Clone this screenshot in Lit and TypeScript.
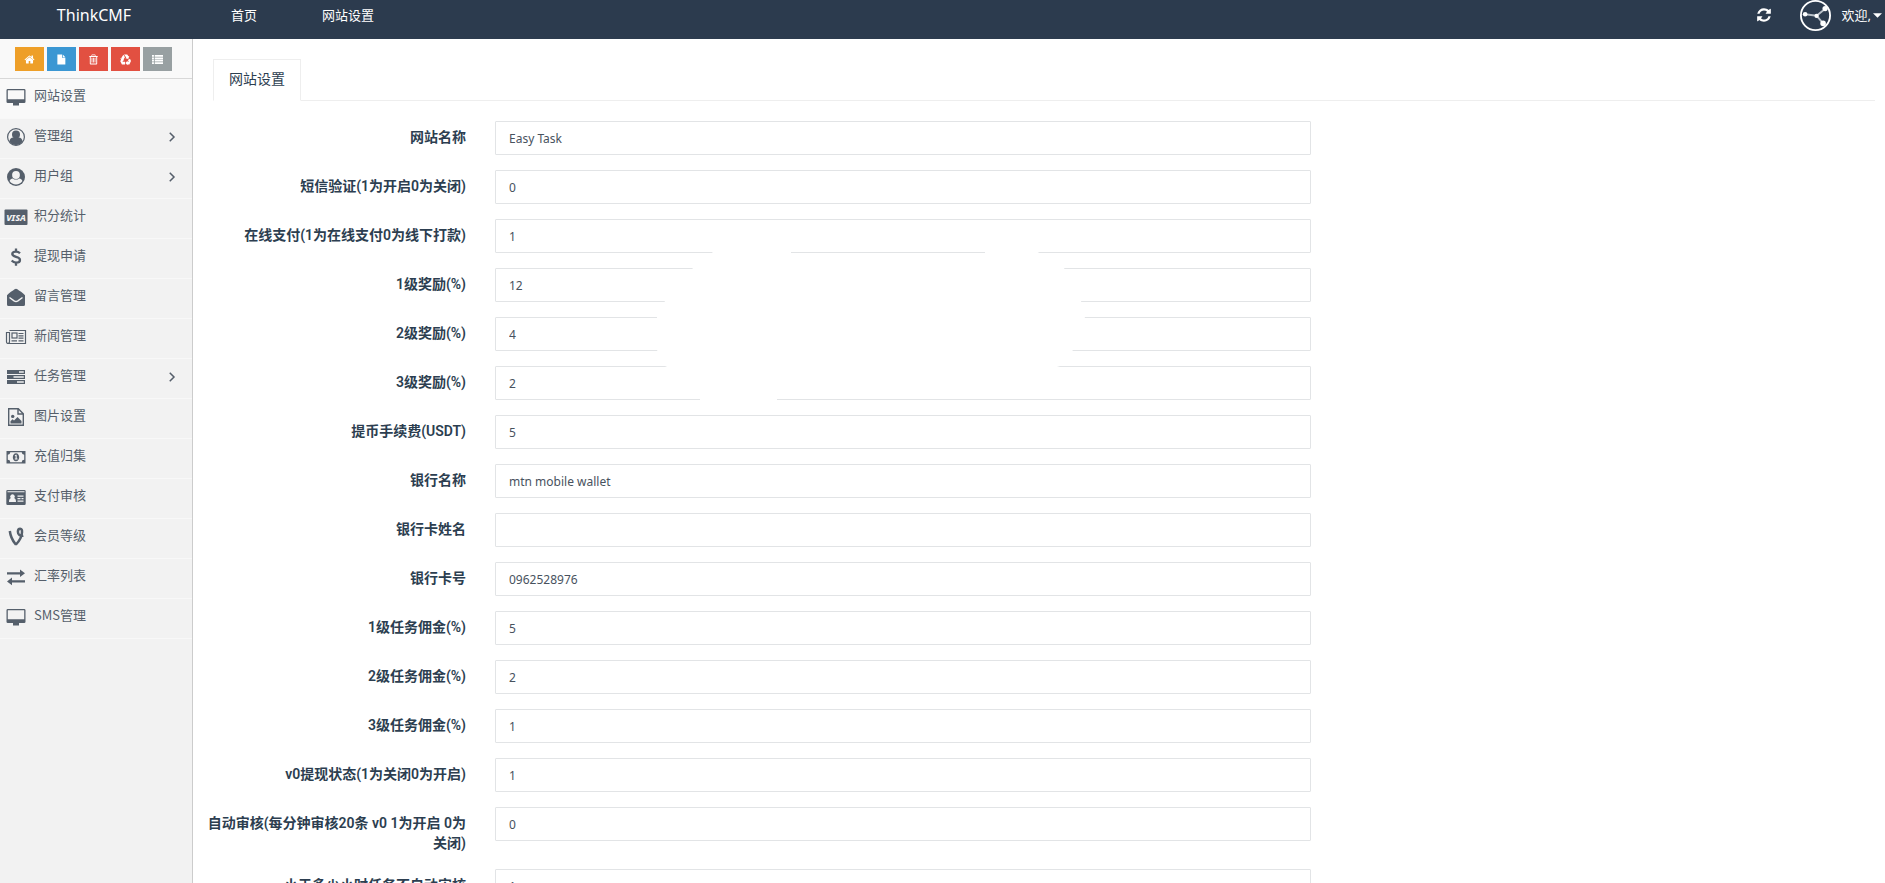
import { LitElement, html, svg, css } from "lit";
import { customElement } from "lit/decorators.js";

// Icon shapes, each on a 20 x 20 grid.
const ICONS: Record<string, unknown> = {
  desktop: svg`<path fill-rule="evenodd" d="M1.800 2h16.400A1.300 1.300 0 0 1 19.500 3.300v11.400a1.300 1.300 0 0 1-1.300 1.300H13v2.500H7V16H1.800A1.300 1.300 0 0 1 .500 14.700V3.300A1.300 1.300 0 0 1 1.800 2zM1.800 3.300v9h16.400v-9z"/>`,
  userCircle: svg`<circle cx="10" cy="10" r="8.400" fill="none" stroke="currentColor" stroke-width="1.200"/><circle cx="10" cy="7.600" r="4"/><path d="M3.300 14.500c.5-2.700 2-4 3.800-4h5.800c1.800 0 3.300 1.300 3.800 4A8 8 0 0 1 10 18a8 8 0 0 1-6.700-3.500z"/>`,
  userRing: svg`<circle cx="10" cy="10" r="9"/><circle cx="10" cy="8" r="3.900" fill="#f2f2f2"/><path fill="#f2f2f2" d="M3.600 14c.5-1.700 1.600-2.500 3.200-2.600 2 1.600 4.400 1.600 6.400 0 1.600.1 2.700.900 3.200 2.600a7.600 7.600 0 0 1-12.800 0z"/>`,
  visa: svg`<rect x="-1.500" y="2.500" width="23" height="15.500" rx="1"/><text x="10" y="14" text-anchor="middle" font-family="Noto Sans, sans-serif" font-size="9" font-weight="800" font-style="italic" fill="#f2f2f2">VISA</text>`,
  dollar: svg`<path fill="none" stroke="currentColor" stroke-width="2.300" d="M14 6.300C12.700 5 11.500 4.600 10 4.600c-2.300 0-3.700 1-3.700 2.500 0 3.700 7.700 1.800 7.700 5.800 0 1.700-1.500 2.700-4 2.700-1.800 0-3.200-.7-4.300-2M10 1.500v3.200M10 15.500v3.200"/>`,
  envelope: svg`<path d="M1 8.200C3 6 7 3.600 8.600 2.300c.9-.7 1.900-.7 2.800 0C13 3.600 17 6 19 8.200V17.500a1.500 1.500 0 0 1-1.500 1.500h-15A1.500 1.500 0 0 1 1 17.500z"/><path fill="none" stroke="#f2f2f2" stroke-width="1.400" d="M3.500 10.500l4.600 3.400c1.200.8 2.600.8 3.800 0l4.600-3.400"/>`,
  news: svg`<g fill="none" stroke="currentColor" stroke-width="1.200"><path d="M3.500 3.500h16v13H2.300A1.800 1.800 0 0 1 .500 14.700V5.500h3M3.500 5v9.700a1.500 1.500 0 0 1-1.500 1.600"/><rect x="6" y="6" width="5" height="5"/><path d="M12.500 6.500h5M12.500 8.800h5M12.500 11.100h5M5.500 13.800h5.500M12.500 13.800h5"/></g>`,
  tasks: svg`<path fill-rule="evenodd" d="M1 3h18v4H1zM1 8h18v4H1zM1 13h18v4H1zM13 4.300v1.500h4.800V4.300zM7.500 9.300v1.500h10.300V9.300zM11 14.300v1.500h6.800v-1.500z"/>`,
  image: svg`<path fill="none" stroke="currentColor" stroke-width="1.400" d="M2.700 1.700h9.600l5 5v11.600H2.700zM12 2v5h5"/><circle cx="6.700" cy="9.400" r="1.700"/><path d="M4.500 16.500v-2.300l2-2 1.500 1.400L11.500 10l4 4v2.500z"/>`,
  money: svg`<path fill-rule="evenodd" d="M.500 4h19v12.500H.500zM1.800 7.700v5.100a2.500 2.500 0 0 1 2.500 2.400h11.400a2.500 2.500 0 0 1 2.500-2.400V7.700a2.500 2.500 0 0 1-2.500-2.400H4.300a2.500 2.500 0 0 1-2.500 2.400z"/><path fill-rule="evenodd" d="M10 6.300c1.900 0 3.200 1.700 3.200 4s-1.300 4-3.200 4-3.200-1.700-3.200-4 1.300-4 3.200-4zM8.700 8.500l.5.700.4-.3v2.600h-.8v1h2.700v-1h-.8V7.800h-.9z"/>`,
  idcard: svg`<path fill-rule="evenodd" d="M1.500 3h17a1.200 1.200 0 0 1 1.200 1.200v12.600a1.200 1.200 0 0 1-1.200 1.200h-17A1.200 1.200 0 0 1 .300 16.800V4.200A1.200 1.200 0 0 1 1.500 3zM1.500 4.200v1h17v-1zM3 15h7c0-2.500-.8-3.600-1.800-3.700a2.300 2.300 0 1 0-3.400 0C3.800 11.400 3 12.500 3 15zM11.500 8.500v1.200h6V8.500zM11.500 11v1.200h3V11zM15.500 11v1.200h2V11zM11.500 13.500v1.200h6v-1.200z"/>`,
  vine: svg`<path fill="none" stroke="currentColor" stroke-width="2.500" d="M3.800 4c.6 4.800 2.600 9.300 5.600 13h1c2.800-3 5.300-6.800 5.600-11.500.2-2.600-.5-3.800-1.800-3.800-1.500 0-2.300 1.100-2.300 3 0 3 2.200 4.700 5.400 4"/>`,
  exchange: svg`<path d="M1 5.200h13V2.500l5 3.800-5 3.800V7.500H1zM19 15.500H6v2.700l-5-3.800 5-3.800v2.600h13z"/>`,
  home: svg`<g transform="scale(.01116)"><path d="M1472 992v480q0 26-19 45t-45 19h-384v-384h-256v384h-384q-26 0-45-19t-19-45v-480q0-1 .5-3t.5-3l575-474 575 474q1 2 1 6zm223-69l-62 74q-8 9-21 11h-3q-13 0-21-7l-692-577-692 577q-12 8-24 7-13-2-21-11l-62-74q-8-10-7-23.500t11-21.500l719-599q32-26 76-26t76 26l244 204v-195q0-14 9-23t23-9h192q14 0 23 9t9 23v408l219 182q10 8 11 21.500t-7 23.500z"/></g>`,
  file: svg`<path d="M2.500 1h8.500v6h6v12h-14.500zM12.300 1l4.700 4.800h-4.700z"/>`,
  trash: svg`<path fill-rule="evenodd" d="M7 1h6l1 2.500h4V5h-1.300v12.500A1.500 1.500 0 0 1 15.200 19H4.800a1.500 1.500 0 0 1-1.500-1.500V5H2V3.500h4zM7.700 2.300l-.5 1.200h5.600l-.5-1.200zM5 5.500v11.800h10V5.500z"/><path d="M6.500 7h1.500v8.500H6.500zM9.200 7h1.500v8.500H9.200zM12 7h1.500v8.500H12z"/>`,
  recycle: svg`<path d="M7.200 1h6l2 3.300 1.600-.8-1.700 5.500-5.300-1.400 1.600-.9-1.700-2.700zM6.200 1.500l2.800 4.300-2 3.500-4.500-2.700zM.300 8.200l5.700-1.400 1.600 5.600-1.600-.9-1.500 2.800h4.600V19H3.500L.500 13.300l1.500-3.900zM18.200 8.600l1.800 4L17 18.900h-3.300v1.400L9.700 16.500l4-4.200v1.900h2.500l-2-3.200z"/>`,
  list: svg`<path d="M0 2h3.500v3.200H0zM5 2h15v3.200H5zM0 6.300h3.500v3.200H0zM5 6.300h15v3.200H5zM0 10.600h3.500v3.200H0zM5 10.600h15v3.200H5zM0 15h3.500v3H0zM5 15h15v3H5z"/>`,
  refresh: svg`<g transform="scale(.01116)"><path d="M1639 1056q0 5-1 7-64 268-268 434.500t-478 166.500q-146 0-282.500-55t-243.500-157l-129 129q-19 19-45 19t-45-19-19-45v-448q0-26 19-45t45-19h448q26 0 45 19t19 45-19 45l-137 137q71 66 161 102t187 36q134 0 250-65t186-179q11-17 53-117 8-23 30-23h192q13 0 22.500 9.500t9.500 22.500zm25-800v448q0 26-19 45t-45 19h-448q-26 0-45-19t-19-45 19-45l138-138q-148-137-349-137-134 0-250 65t-186 179q-11 17-53 117-8 23-30 23h-199q-13 0-22.500-9.500t-9.500-22.500v-7q65-268 270-434.500t480-166.500q146 0 284 55.500t245 156.500l130-129q19-19 45-19t45 19 19 45z"/></g>`,
  avatar: svg`<circle cx="10" cy="10" r="9.400" fill="none" stroke="currentColor" stroke-width="1.200"/><path fill="none" stroke="#b9c0c8" stroke-width="1.200" d="M3.300 9.200l7.400.9 6-4.800M10.700 10.100l4.200 5"/><circle cx="3.300" cy="9.200" r="1.500"/><circle cx="10.700" cy="10.200" r="1.400"/><circle cx="16.200" cy="5.500" r="1.700"/><circle cx="14.900" cy="15.100" r="1.800"/>`,
  caret: svg`<path d="M0 5h20L10 15z"/>`,
  chevron: svg`<path fill="none" stroke="currentColor" stroke-width="3" d="M5.500 1.500l8.500 8.500-8.500 8.500"/>`,
};

const icon = (name: string, cls = "") =>
  html`<svg class="icon ${cls}" viewBox="0 0 20 20" aria-hidden="true">${ICONS[name]}</svg>`;

const SHORTCUTS = [
  ["home", "orange", "后台首页"],
  ["file", "blue", "文章"],
  ["trash", "red", "清除"],
  ["recycle", "red", "回收站"],
  ["list", "grey", "列表"],
];

const MENU: [string, string, boolean?][] = [
  ["desktop", "网站设置"],
  ["userCircle", "管理组", true],
  ["userRing", "用户组", true],
  ["visa", "积分统计"],
  ["dollar", "提现申请"],
  ["envelope", "留言管理"],
  ["news", "新闻管理"],
  ["tasks", "任务管理", true],
  ["image", "图片设置"],
  ["money", "充值归集"],
  ["idcard", "支付审核"],
  ["vine", "会员等级"],
  ["exchange", "汇率列表"],
  ["desktop", "SMS管理"],
];

const FIELDS = [
  ["网站名称", "Easy Task"],
  ["短信验证(1为开启0为关闭)", "0"],
  ["在线支付(1为在线支付0为线下打款)", "1"],
  ["1级奖励(%)", "12"],
  ["2级奖励(%)", "4"],
  ["3级奖励(%)", "2"],
  ["提币手续费(USDT)", "5"],
  ["银行名称", "mtn mobile wallet"],
  ["银行卡姓名", ""],
  ["银行卡号", "0962528976"],
  ["1级任务佣金(%)", "5"],
  ["2级任务佣金(%)", "2"],
  ["3级任务佣金(%)", "1"],
  ["v0提现状态(1为关闭0为开启)", "1"],
  ["自动审核(每分钟审核20条 v0 1为开启 0为关闭)", "0"],
  ["小于多少小时任务不自动审核", "1"],
];

@customElement("app-root")
export class AppRoot extends LitElement {
  static styles = css`
    :host {
      display: flex;
      flex-direction: column;
      height: 100vh;
      overflow: hidden;
      background: #fff;
      color: #2c3e50;
      font-family: "Noto Sans", "Noto Sans CJK SC", sans-serif;
      font-size: 14px;
      line-height: 20px;
    }
    * { box-sizing: border-box; }
    a { color: inherit; text-decoration: none; }
    .icon { display: block; flex: none; width: 20px; height: 20px; fill: currentColor; overflow: visible; }

    .top {
      display: flex;
      flex: none;
      height: 39px;
      padding-bottom: 9px;
      align-items: center;
      background: #2c3b4e;
      color: #fff;
      font-size: 13px;
    }
    .brand { width: 188px; text-align: center; font-size: 16px; }
    .nav { display: flex; flex: 1; gap: 65px; padding-left: 43px; }
    .account { display: flex; align-items: center; padding-right: 3px; }
    .tool { padding: 0; border: 0; background: none; color: inherit; font: inherit; cursor: pointer; }
    .refresh { width: 16px; height: 16px; }
    .user { display: flex; align-items: center; height: 30px; margin-left: 28px; }
    .avatar { width: 31px; height: 31px; margin-right: 11px; }
    .caret { width: 9px; height: 9px; margin-left: 2px; }

    .body { display: flex; flex: 1; min-height: 0; }
    .side {
      flex: none;
      width: 193px;
      border-right: 1px solid #ccc;
      background: #f2f2f2;
      color: #555f6b;
    }
    .shortcuts {
      display: flex;
      gap: 3px;
      height: 40px;
      padding: 8px 0 7px 15px;
      border-bottom: 1px solid #d8d8d8;
      background: #f9f9f9;
    }
    .short {
      display: grid;
      place-items: center;
      width: 29px;
      height: 24px;
      padding: 0;
      border: 0;
      color: #fff;
    }
    .short .icon { width: 11px; height: 11px; }
    .orange { background: #ee9f28; }
    .blue { background: #3b97d3; }
    .red { background: #e25041; }
    .grey { background: #98a0a2; }
    .menu { margin: 0; padding: 0; list-style: none; font-family: "Noto Sans CJK SC", sans-serif; font-size: 13px; }
    .entry {
      display: flex;
      align-items: center;
      gap: 8px;
      height: 40px;
      padding: 0 15px 4px 6px;
      border-bottom: 1px solid #f8f8f8;
    }
    .current { background: #f9f9f9; }
    .entry .chevron { width: 10px; height: 10px; margin-left: auto; }
    .entry-text { padding-bottom: 3px; }

    .main { flex: 1; min-width: 0; padding: 20px 10px 0 20px; }
    .tabs { display: flex; border-bottom: 1px solid #eee; }
    .tab {
      margin-bottom: -1px;
      padding: 9px 15px 11px;
      border: 1px solid #eee;
      border-bottom-color: #fff;
    }
    .form { position: relative; padding-top: 20px; }
    .field {
      display: grid;
      grid-template-columns: 2fr 6fr 4fr;
      margin: 0 -15px 15px;
      align-items: start;
    }
    .name {
      padding: 6px 14px 1px 4px;
      text-align: right;
      font-family: Roboto, "Noto Sans CJK SC", sans-serif;
      font-weight: 600;
    }
    .cell { padding: 0 15px; }
    .box {
      display: block;
      width: 100%;
      height: 34px;
      padding: 6px 13px;
      border: 1px solid #e2e4e6;
      border-radius: 1px;
      background: #fff;
      color: #48525e;
      font-family: inherit;
      font-size: 12px;
      line-height: 20px;
      outline: 0;
    }
    .glare {
      position: absolute;
      top: 140px;
      left: 442px;
      width: 432px;
      height: 165px;
      pointer-events: none;
    }
  `;

  render() {
    return html`
      <header class="top">
        <a class="brand" href="#">ThinkCMF</a>
        <nav class="nav">
          <a href="#">首页</a>
          <a href="#">网站设置</a>
        </nav>
        <div class="account">
          <button class="tool" aria-label="刷新">${icon("refresh", "refresh")}</button>
          <button class="tool user">${icon("avatar", "avatar")}欢迎,${icon("caret", "caret")}</button>
        </div>
      </header>
      <div class="body">
        <aside class="side">
          <div class="shortcuts">
            ${SHORTCUTS.map(([name, tone, title]) => html`<button class="short ${tone}" aria-label=${title}>${icon(name)}</button>`)}
          </div>
          <ul class="menu">
            ${MENU.map(
              ([name, text, more], i) => html`<li>
                <a class="entry ${i === 0 ? "current" : ""}" href="#">
                  ${icon(name)}<span class="entry-text">${text}</span>${more ? icon("chevron", "chevron") : ""}
                </a>
              </li>`
            )}
          </ul>
        </aside>
        <main class="main">
          <nav class="tabs"><a class="tab" href="#">网站设置</a></nav>
          <form class="form">
            ${FIELDS.map(
              ([text, value], i) => html`<div class="field">
                <label class="name" for="field-${i}">${text}</label>
                <div class="cell"><input class="box" id="field-${i}" type="text" .value=${value} /></div>
              </div>`
            )}
            <svg class="glare" viewBox="655 241 432 165" preserveAspectRatio="none" aria-hidden="true">
              <path fill="#fff" d="M713 252V241h78v16h194v-16h51v10l28 17 17 33 4 16-12 33-13 16-50 16H777v22h-77v-22l-35-16-8-16v-33l8-16 28-33z"/>
            </svg>
          </form>
        </main>
      </div>
    `;
  }
}
